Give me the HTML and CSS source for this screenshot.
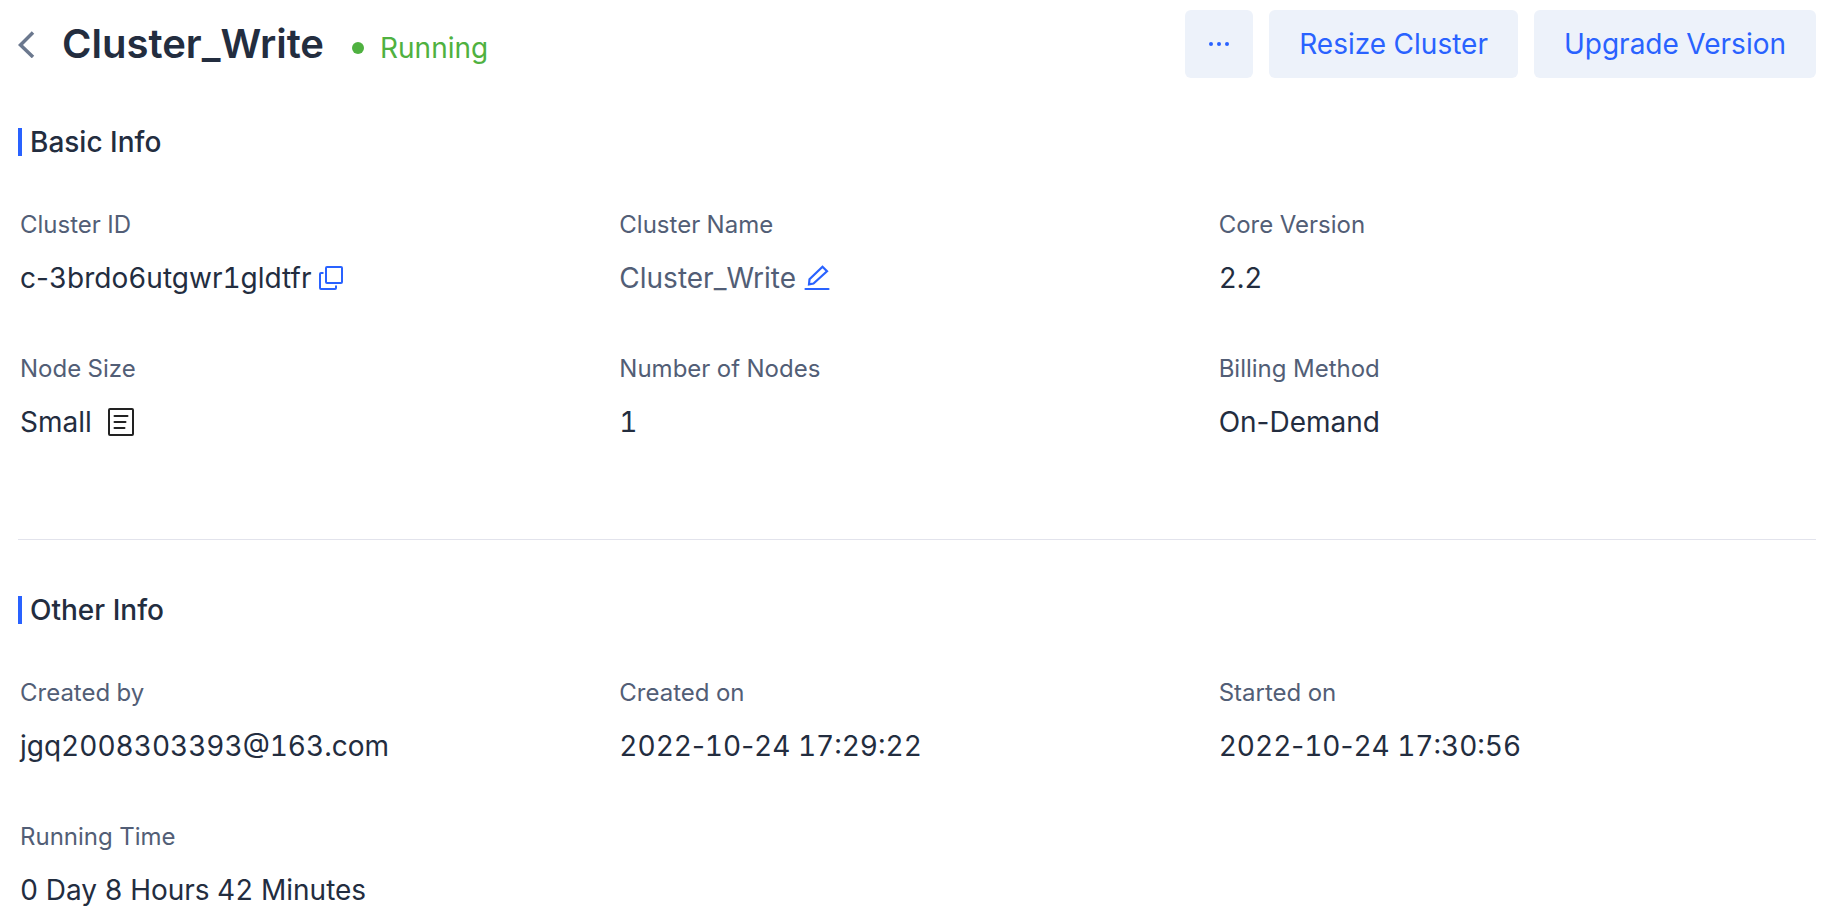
FILE: index.html
```html
<!DOCTYPE html>
<html lang="en">
<head>
<meta charset="utf-8">
<title>Cluster_Write</title>
<link rel="stylesheet" href="styles.css">
</head>
<body>
<main class="page">
  <header class="header">
    <button class="back" type="button" aria-label="Back">
      <svg width="18" height="28" viewBox="0 0 18 28" fill="none" stroke="#6b788e" stroke-width="3.500"><path d="M15 2.500 2.500 15l12.500 12"/></svg>
    </button>
    <h1 class="title">Cluster_Write</h1>
    <span class="status">Running</span>
    <div class="actions">
      <button class="btn btn-more" type="button" aria-label="More">
        <svg width="20" height="4" viewBox="0 0 20 4" fill="#2962ff"><circle cx="2" cy="2" r="2"/><circle cx="10" cy="2" r="2"/><circle cx="18" cy="2" r="2"/></svg>
      </button>
      <button class="btn" type="button">Resize Cluster</button>
      <button class="btn" type="button">Upgrade Version</button>
    </div>
  </header>

  <section class="section">
    <h2 class="heading">Basic Info</h2>
    <dl class="grid">
      <div class="item"><dt>Cluster ID</dt>
        <dd><span>c<span class="dash">-</span>3brdo6utgwr1gldtfr</span>
          <button class="icon" type="button" aria-label="Copy">
            <svg width="24" height="24" viewBox="0 0 24 24" fill="none" stroke="#2962ff" stroke-width="2" stroke-linejoin="round"><rect x="7" y="1" width="16" height="16" rx="1"/><path d="M4.500 7H2a1 1 0 0 0-1 1v14a1 1 0 0 0 1 1h14a1 1 0 0 0 1-1v-2.500"/></svg>
          </button></dd></div>
      <div class="item"><dt>Cluster Name</dt>
        <dd class="muted">Cluster_Write
          <button class="icon" type="button" aria-label="Edit name">
            <svg width="26" height="26" viewBox="0 0 26 26" fill="none" stroke="#2962ff" stroke-width="2.200"><path d="M18.500 1.800 23 6.200 9.500 18.500l-4.500.8.500-5z"/><path d="M1.500 24h23" stroke-linecap="round"/></svg>
          </button></dd></div>
      <div class="item"><dt>Core Version</dt><dd>2.2</dd></div>
      <div class="item"><dt>Node Size</dt>
        <dd>Small
          <button class="icon icon-detail" type="button" aria-label="Node details">
            <svg width="26" height="28" viewBox="0 0 26 28" fill="none" stroke="#222" stroke-width="2" stroke-linecap="round"><rect x="1" y="1" width="24" height="26" rx="1"/><path d="M6.500 8h13M6.500 14h11M6.500 20h10"/></svg>
          </button></dd></div>
      <div class="item"><dt>Number of Nodes</dt><dd>1</dd></div>
      <div class="item"><dt>Billing Method</dt><dd><span>On<span class="dash">-</span>Demand</span></dd></div>
    </dl>
  </section>

  <section class="section section-ruled">
    <h2 class="heading">Other Info</h2>
    <dl class="grid">
      <div class="item"><dt>Created by</dt><dd>jgq2008303393@163.com</dd></div>
      <div class="item"><dt>Created on</dt><dd><time>2022<span class="dash">-</span>10<span class="dash">-</span>24 17:29:22</time></dd></div>
      <div class="item"><dt>Started on</dt><dd><time>2022<span class="dash">-</span>10<span class="dash">-</span>24 17:30:56</time></dd></div>
      <div class="item"><dt>Running Time</dt><dd>0 Day 8 Hours 42 Minutes</dd></div>
    </dl>
  </section>
</main>
</body>
</html>
```
FILE: styles.css
```css
* { box-sizing: border-box; }
body {
  margin: 0;
  background: #fff;
  color: #232d3f;
  font-family: Inter, "Liberation Sans", sans-serif;
  font-size: 28px;
  font-variant-numeric: tabular-nums;
}
button {
  font: inherit;
  border: 0;
  padding: 0;
  background: none;
  cursor: pointer;
}
svg { display: block; }
h1, h2, dl, dd { margin: 0; }
.page { padding: 10px 6px 0 18px; }
.header { display: flex; align-items: center; height: 68px; }
.back { margin-right: 26px; }
.title { font-size: 40px; font-weight: 600; line-height: 48px; }
.status {
  display: flex;
  align-items: center;
  gap: 16px;
  margin: 8px 0 0 28px;
  line-height: 36px;
  color: #4fb140;
}
.status::before {
  content: "";
  width: 12px;
  height: 12px;
  border-radius: 50%;
  background: currentColor;
}
.actions { display: flex; gap: 16px; margin-left: auto; }
.btn {
  height: 68px;
  padding: 0 30px;
  border-radius: 6px;
  background: #edf2fa;
  color: #2962ff;
}
.btn-more { display: flex; align-items: center; justify-content: center; width: 68px; padding: 0; }
.section { padding-top: 50px; }
.section-ruled { margin-top: 93px; padding-top: 56px; border-top: 1px solid #e2e3ec; }
.heading {
  margin-bottom: 51px;
  padding-left: 8px;
  border-left: 4px solid #2962ff;
  font-size: 28px;
  font-weight: 500;
  line-height: 28px;
}
.grid {
  display: grid;
  grid-template-columns: repeat(3, 1fr);
  row-gap: 49px;
}
.item { padding-left: 2px; }
dt { margin-bottom: 11px; font-size: 24px; line-height: 36px; color: #525e76; }
dd { display: flex; align-items: center; line-height: 48px; }
.muted { color: #525e76; }
/* Digits line up in columns; hyphens keep their own width. */
.dash { font-variant-numeric: normal; }
.icon { margin-left: 8px; }
.icon-detail { margin-left: 16px; }
```
